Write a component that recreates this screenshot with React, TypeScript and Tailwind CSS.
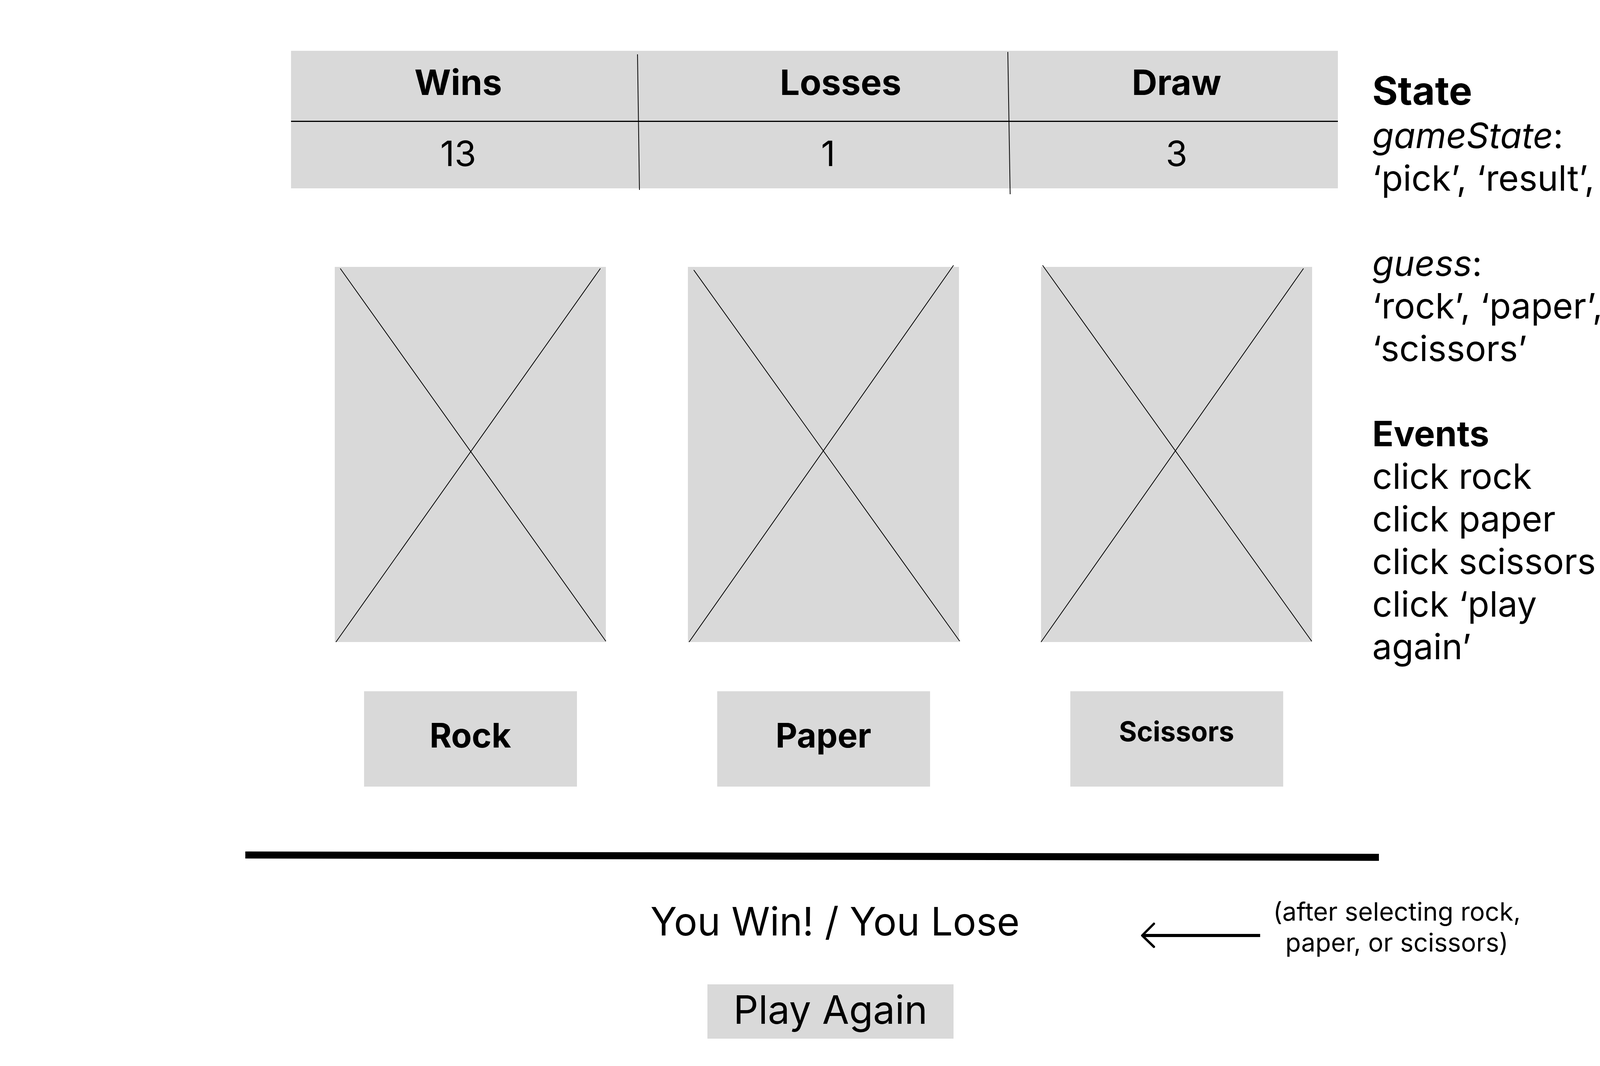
import React from 'react'

// Wireframe: rock / paper / scissors, with a state + events note on the right.

type Line = [number, number, number, number]

interface Choice {
  label: string
  a: Line
  b: Line
  textClass: string
}

const CHOICES: Choice[] = [
  { label: 'Rock', a: [14, 4, 694, 958], b: [680, 4, 3, 960], textClass: 'text-[86px] pb-[18px]' },
  { label: 'Paper', a: [15, 8, 696, 958], b: [680, -4, 3, 960], textClass: 'text-[86px] pb-[18px]' },
  { label: 'Scissors', a: [4, -4, 693, 958], b: [672, 4, 0, 960], textClass: 'text-[70px] pb-[38px]' },
]

const SCORE = [
  { head: 'Wins', value: '13', headPad: 'pr-[34px]', valuePad: 'pr-[34px]', width: 'w-[890px]' },
  { head: 'Losses', value: '1', headPad: 'pl-[86px]', valuePad: 'pl-[22px]', width: 'w-[948px]' },
  { head: 'Draw', value: '3', headPad: 'pl-[16px]', valuePad: 'pl-[16px]', width: 'w-[842px]' },
]

function Placeholder({ a, b }: { a: Line; b: Line }) {
  return (
    <div className="relative w-[694px] h-[960px] bg-[#d9d9d9]">
      <svg
        className="absolute inset-0 overflow-visible"
        width={694}
        height={960}
        viewBox="0 0 694 960"
      >
        <line x1={a[0]} y1={a[1]} x2={a[2]} y2={a[3]} stroke="#000" strokeWidth={2} />
        <line x1={b[0]} y1={b[1]} x2={b[2]} y2={b[3]} stroke="#000" strokeWidth={2} />
      </svg>
    </div>
  )
}

function ScoreTable() {
  return (
    <div className="relative flex w-[2680px] bg-[#d9d9d9]">
      {SCORE.map((col) => (
        <div key={col.head} className={`flex flex-col ${col.width}`}>
          <div
            className={`h-[182px] flex items-center justify-center border-b-[3px] border-black pb-[18px] text-[90px] leading-[109px] font-bold ${col.headPad}`}
          >
            {col.head}
          </div>
          <div
            className={`h-[170px] flex items-center justify-center pb-[9px] text-[90px] leading-[109px] ${col.valuePad}`}
          >
            {col.value}
          </div>
        </div>
      ))}
      {/* hand-drawn column dividers, slightly off and overhanging */}
      <svg
        className="absolute left-0 top-0 overflow-visible pointer-events-none"
        width={2680}
        height={352}
        viewBox="0 0 2680 352"
      >
        <line x1={887} y1={9} x2={892} y2={356} stroke="#000" strokeWidth={2} />
        <line x1={1835} y1={3} x2={1841} y2={367} stroke="#000" strokeWidth={2} />
      </svg>
    </div>
  )
}

function Notes() {
  return (
    <div className="pt-[41px] text-[90px] leading-[109px] whitespace-nowrap">
      <div className="text-[100px] leading-[121px] font-bold">State</div>
      <div>
        <span className="italic">gameState</span>:
      </div>
      <div>‘pick’, ‘result’,</div>
      <div className="h-[109px]" />
      <div>
        <span className="italic">guess</span>:
      </div>
      <div>‘rock’, ‘paper’,</div>
      <div>‘scissors’</div>
      <div className="h-[109px]" />
      <div className="font-bold">Events</div>
      <div>click rock</div>
      <div>click paper</div>
      <div>click scissors</div>
      <div>click ‘play</div>
      <div>again’</div>
    </div>
  )
}

export default function App() {
  return (
    <div className="w-[4200px] h-[2728px] bg-white text-black font-[Inter,sans-serif] overflow-hidden">
      <div className="flex items-start pl-[745px] pt-[130px]">
        <div className="flex flex-col w-[2680px]">
          <ScoreTable />

          <div className="flex gap-[210px] ml-[112px] mt-[201px]">
            {CHOICES.map((c) => (
              <div key={c.label} className="flex flex-col w-[694px]">
                <Placeholder a={c.a} b={c.b} />
                <button
                  type="button"
                  className={`mx-auto mt-[126px] w-[545px] h-[244px] flex items-center justify-center bg-[#d9d9d9] font-bold leading-[1.21] ${c.textClass}`}
                >
                  {c.label}
                </button>
              </div>
            ))}
          </div>
        </div>

        <div className="ml-[88px]">
          <Notes />
        </div>
      </div>

      {/* divider */}
      <div className="ml-[628px] mt-[169px] w-[2902px] h-[18px] bg-black rotate-[0.12deg]" />

      <div className="flex items-start h-[121px] mt-[97px] pl-[1665px]">
        <div className="w-[924px] text-[100px] leading-[121px] whitespace-nowrap">
          You Win! / You Lose
        </div>
        <svg
          className="ml-[331px] mt-[62px] shrink-0"
          width={310}
          height={70}
          viewBox="0 0 310 70"
          fill="none"
          stroke="#000"
        >
          <line x1={4} y1={35} x2={306} y2={35} strokeWidth={8} />
          <polyline
            points="34,5 4,35 34,64"
            strokeWidth={6}
            strokeLinecap="round"
            strokeLinejoin="round"
          />
        </svg>
        <div className="w-[692px] -mt-[4px] text-center text-[65px] leading-[79px]">
          <div>(after selecting rock,</div>
          <div>paper, or scissors)</div>
        </div>
      </div>

      <button
        type="button"
        className="ml-[1811px] mt-[101px] w-[630px] h-[139px] flex items-center justify-center bg-[#d9d9d9] pb-[11px] text-[100px] leading-[121px]"
      >
        Play Again
      </button>
    </div>
  )
}
